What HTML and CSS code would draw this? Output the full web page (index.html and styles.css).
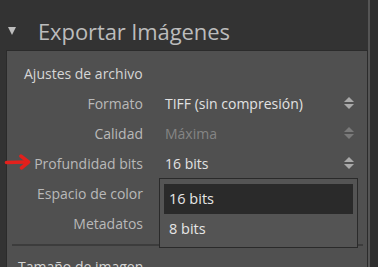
FILE: index.html
```html
<!DOCTYPE html>
<html lang="es">
  <head>
    <meta charset="UTF-8" />
    <title>Exportar Imágenes</title>
    <link rel="stylesheet" href="styles.css">
  </head>
  <body>
    <div class="page">
      <div class="main">
        <div class="header">
          <span class="caret"></span>
          <h1>Exportar Imágenes</h1>
        </div>
        <div class="panel">
          <div class="section-title">Ajustes de archivo</div>
          <div class="row">
            <div class="label">Formato</div>
            <div class="value">TIFF (sin compresión)</div>
            <div class="spin"><i class="up"></i><i class="down"></i></div>
          </div>
          <div class="row disabled">
            <div class="label">Calidad</div>
            <div class="value">Máxima</div>
            <div class="spin"><i class="up"></i><i class="down"></i></div>
          </div>
          <div class="row marked">
            <svg class="arrow" width="28" height="16" viewBox="0 0 28 16">
              <path d="M2.5 8.5 L23 8" stroke="#e3201c" stroke-width="3.6" stroke-linecap="round" fill="none"/>
              <path d="M17 2.2 L24.5 8 L17.5 13.8" stroke="#e3201c" stroke-width="3.6" stroke-linecap="round" stroke-linejoin="round" fill="none"/>
            </svg>
            <div class="label">Profundidad bits</div>
            <div class="value">16 bits</div>
            <div class="spin"><i class="up"></i><i class="down"></i></div>
            <ul class="menu">
              <li class="current">16 bits</li>
              <li>8 bits</li>
            </ul>
          </div>
          <div class="row">
            <div class="label">Espacio de color</div>
          </div>
          <div class="row">
            <div class="label">Metadatos</div>
          </div>
          <div class="sep"></div>
          <div class="section-title next">Tamaño de imagen</div>
        </div>
      </div>
      <div class="scroll"></div>
    </div>
  </body>
</html>
```
FILE: styles.css
```css
body,
ul,
li,
h1 {
  margin: 0;
  padding: 0;
}
ul {
  list-style: none;
}
body {
  background: #333;
  font-family: "Open Sans", "Noto Sans", sans-serif;
  overflow: hidden;
  height: 267px;
}
.page {
  display: flex;
  height: 267px;
  overflow: hidden;
}
.main {
  width: 368px;
  border-right: 2px solid #555;
}
.scroll {
  flex: 1;
  background: #2e2e2e;
}
.header {
  height: 50px;
  display: flex;
  align-items: center;
  padding-top: 12px;
  box-sizing: border-box;
}
.caret {
  width: 0;
  height: 0;
  margin-left: 8px;
  margin-right: 22px;
  border-left: 4.5px solid transparent;
  border-right: 4.5px solid transparent;
  border-top: 8px solid #bdbdbd;
}
.header h1 {
  font-weight: normal;
  font-size: 22px;
  color: #bcbcbc;
  letter-spacing: -0.1px;
}
.panel {
  margin-left: 6px;
  height: 217px;
  background: #505050;
  border-top: 1px solid #2b2b2b;
  border-left: 1px solid #2b2b2b;
  border-right: 1px solid #2b2b2b;
  box-sizing: border-box;
}
.section-title {
  color: #d6d6d6;
  font-size: 14px;
  padding: 13px 0 0 17px;
  height: 37px;
  box-sizing: border-box;
}
.row {
  position: relative;
  display: flex;
  align-items: center;
  height: 30px;
  font-size: 14px;
}
.label {
  width: 136px;
  text-align: right;
  color: #b9b9b9;
}
.value {
  margin-left: 22px;
  color: #e2e2e2;
  flex: 1;
}
.disabled .value {
  color: #858585;
}
.spin {
  width: 9px;
  margin-right: 14px;
  display: flex;
  flex-direction: column;
  gap: 2px;
}
.spin i {
  width: 0;
  height: 0;
  border-left: 5px solid transparent;
  border-right: 5px solid transparent;
}
.spin .up {
  border-bottom: 5px solid #a9a9a9;
}
.spin .down {
  border-top: 5px solid #a9a9a9;
}
.disabled .spin .up {
  border-bottom-color: #7a7a7a;
}
.disabled .spin .down {
  border-top-color: #7a7a7a;
}
.arrow {
  position: absolute;
  left: -3px;
  top: 6px;
}
.menu {
  position: absolute;
  left: 152px;
  top: 30px;
  width: 199px;
  height: 70px;
  box-sizing: border-box;
  border: 1px solid #2a2a2a;
  background: #545454;
  padding: 5px 4px;
  z-index: 2;
}
.menu li {
  height: 30px;
  line-height: 30px;
  padding-left: 5px;
  color: #e6e6e6;
  font-size: 14.5px;
}
.menu li.current {
  background: #2a2a2a;
}
.sep {
  margin: 6px 4px 0 5px;
  height: 2px;
  background: #3c3c3c;
}
.section-title.next {
  padding: 11px 0 0 11px;
}
```
